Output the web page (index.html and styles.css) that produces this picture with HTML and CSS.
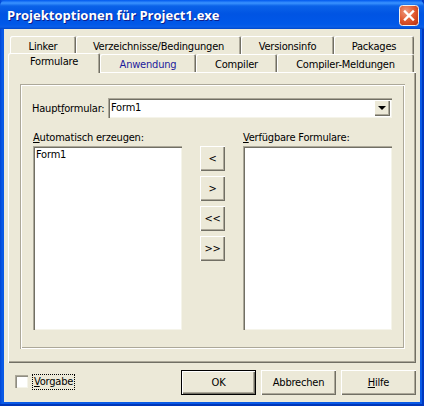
FILE: index.html
```html
<!DOCTYPE html>
<html lang="de">
<head>
	<meta charset="utf-8">
	<title>Projektoptionen</title>
	<link rel="stylesheet" href="styles.css">
</head>
<body>
	<div class="window">
		<div class="titlebar">
			<span class="title-text">Projektoptionen für Project1.exe</span>
			<div class="close-btn">
				<svg width="20" height="21" viewBox="0 0 20 21">
					<defs>
						<radialGradient id="redface" cx="35%" cy="30%" r="85%">
							<stop offset="0" stop-color="#ee9a80"/>
							<stop offset="0.55" stop-color="#e0582f"/>
							<stop offset="1" stop-color="#bd3413"/>
						</radialGradient>
					</defs>
					<rect x="0.5" y="0.5" width="19" height="20" rx="3" fill="url(#redface)" stroke="#f4f1ec"/>
					<path d="M6 6.5 L14 14.5 M14 6.5 L6 14.5" stroke="#fff" stroke-width="2.4" stroke-linecap="square"/>
				</svg>
			</div>
		</div>
		<div class="client">
			<div class="tab-row tab-row-back">
				<div class="tab w-linker">Linker</div>
				<div class="tab w-verz">Verzeichnisse/Bedingungen</div>
				<div class="tab w-vers">Versionsinfo</div>
				<div class="tab w-pack">Packages</div>
			</div>
			<div class="tab-row tab-row-front">
				<div class="tab tab-active w-form">Formulare</div>
				<div class="tab tab-hot w-anw">Anwendung</div>
				<div class="tab w-comp">Compiler</div>
				<div class="tab w-meld">Compiler-Meldungen</div>
			</div>
			<div class="page">
				<div class="group">
					<div class="main-form-row">
						<label class="main-form-label">Haupt<u>f</u>ormular:</label>
						<div class="combo">
							<span class="combo-text">Form1</span>
							<div class="combo-arrow"><span class="arrow-down"></span></div>
						</div>
					</div>
					<div class="lists">
						<div class="list-col">
							<label class="list-label"><u>A</u>utomatisch erzeugen:</label>
							<div class="listbox">Form1</div>
						</div>
						<div class="move-btns">
							<div class="btn move-btn">&lt;</div>
							<div class="btn move-btn">&gt;</div>
							<div class="btn move-btn">&lt;&lt;</div>
							<div class="btn move-btn">&gt;&gt;</div>
						</div>
						<div class="list-col">
							<label class="list-label"><u>V</u>erfügbare Formulare:</label>
							<div class="listbox"></div>
						</div>
					</div>
				</div>
			</div>
			<div class="footer">
				<div class="checkbox"></div>
				<span class="check-label"><u>V</u>orgabe</span>
				<div class="footer-btns">
					<div class="btn footer-btn btn-default">OK</div>
					<div class="btn footer-btn">Abbrechen</div>
					<div class="btn footer-btn"><span><u>H</u>ilfe</span></div>
				</div>
			</div>
		</div>
	</div>
</body>
</html>
```

FILE: styles.css
```css
html, body {
	margin: 0;
	padding: 0;
}

body {
	width: 424px;
	height: 406px;
	overflow: hidden;
	font-family: "DejaVu Sans", "Liberation Sans", sans-serif;
	font-stretch: condensed;
	font-size: 11px;
	letter-spacing: -0.2px;
	color: #000;
}

u {
	text-underline-offset: 1px;
}

.window {
	width: 424px;
	height: 406px;
	box-sizing: border-box;
	padding: 0 4px 4px;
	background: linear-gradient(90deg, #0046d5 0, #0a5ae6 2px, #0a5ae6 4px);
	display: flex;
	flex-direction: column;
	box-shadow: inset -2px 0 0 #0038c0, inset 0 -2px 0 #0036b8;
}

.titlebar {
	height: 29px;
	box-sizing: border-box;
	margin: 0 -4px;
	padding: 1px 5px 0 7px;
	display: flex;
	align-items: center;
	justify-content: space-between;
	background: linear-gradient(180deg, #0058ee 0, #3a93ff 3px, #0a62e8 6px, #0054e3 14px, #0058e8 24px, #0a5ee8 27px, #0046c8 29px);
	border-radius: 6px 6px 0 0;
}

.title-text {
	font-family: "Open Sans", "Noto Sans", sans-serif;
	font-stretch: normal;
	font-size: 13px;
	font-weight: 700;
	letter-spacing: 0;
	color: #fff;
	text-shadow: 1px 1px 0 #0f1f8c;
}

.close-btn {
	width: 20px;
	height: 21px;
}

.client {
	flex: 1;
	background: #ece9d8;
	padding: 7px 4px 0 4px;
	display: flex;
	flex-direction: column;
}

.tab-row {
	display: flex;
	height: 18px;
}

.tab-row-back {
	padding-left: 2px;
}

.tab {
	box-sizing: border-box;
	text-align: center;
	line-height: 22px;
	background: #ece9d8;
	border-radius: 2px 2px 0 0;
	box-shadow: inset 1px 1px 0 #fff, inset -1px 0 0 #716f64, inset -2px 0 0 #aca899;
}

.w-linker { width: 66px; }
.w-verz { width: 165px; }
.w-vers { width: 93px; }
.w-pack { width: 80px; }
.w-form { width: 92px; }
.w-anw { width: 96px; }
.w-comp { width: 81px; }
.w-meld { width: 137px; }

.tab-row-front .tab-active {
	height: 20px;
	margin-top: -1px;
	line-height: 18px;
	position: relative;
	z-index: 1;
}

.tab-hot {
	color: #1c1a9c;
}

.page {
	box-sizing: border-box;
	width: 408px;
	height: 291px;
	padding: 12px 11px 14px 12px;
	background: #ece9d8;
	box-shadow: inset 1px 1px 0 #fff, inset -1px -1px 0 #716f64, inset -2px -2px 0 #aca899;
}

.group {
	box-sizing: border-box;
	height: 265px;
	padding: 14px 13px 0 12px;
	box-shadow: inset 1px 1px 0 #aca899, inset 2px 2px 0 #fff, inset -1px -1px 0 #fff, inset -2px -2px 0 #aca899;
}

.main-form-row {
	display: flex;
	align-items: center;
	height: 20px;
}

.main-form-label {
	width: 76px;
}

.combo {
	flex: 1;
	height: 20px;
	box-sizing: border-box;
	padding: 2px;
	display: flex;
	background: #fff;
	box-shadow: inset 1px 1px 0 #aca899, inset 2px 2px 0 #716f64, inset -1px -1px 0 #f5f4ea;
}

.combo-text {
	flex: 1;
	padding-left: 1px;
	line-height: 16px;
}

.combo-arrow {
	width: 16px;
	height: 16px;
	display: flex;
	align-items: center;
	justify-content: center;
	background: #ece9d8;
	box-shadow: inset 1px 1px 0 #fff, inset -1px -1px 0 #716f64, inset -2px -2px 0 #aca899;
}

.arrow-down {
	width: 0;
	height: 0;
	border-style: solid;
	border-width: 4px 4px 0;
	border-color: #000 transparent transparent;
}

.lists {
	display: grid;
	grid-template-columns: 149px 25px 149px;
	column-gap: 18px;
	margin-left: 1px;
	margin-top: 10px;
}

.list-col {
	display: flex;
	flex-direction: column;
}

.list-label {
	height: 18px;
	line-height: 19px;
}

.listbox {
	box-sizing: border-box;
	height: 184px;
	padding: 2px 3px;
	line-height: 14px;
	background: #fff;
	box-shadow: inset 1px 1px 0 #aca899, inset 2px 2px 0 #716f64, inset -1px -1px 0 #f5f4ea;
}

.move-btns {
	display: flex;
	flex-direction: column;
	gap: 5px;
	padding-top: 18px;
}

.btn {
	box-sizing: border-box;
	display: flex;
	align-items: center;
	justify-content: center;
	background: #ece9d8;
	box-shadow: inset 1px 1px 0 #fff, inset -1px -1px 0 #716f64, inset -2px -2px 0 #aca899;
}

.move-btn {
	height: 25px;
}

.footer {
	display: flex;
	align-items: flex-start;
	height: 39px;
	box-sizing: border-box;
	padding: 7px 0 0 7px;
}

.checkbox {
	box-sizing: border-box;
	width: 13px;
	height: 13px;
	margin-top: 5px;
	background: #fff;
	box-shadow: inset 1px 1px 0 #aca899, inset 2px 2px 0 #8f8d82, inset -1px -1px 0 #f5f4ea;
}

.check-label {
	margin: 4px 0 0 4px;
	padding: 0 1px;
	height: 14px;
	line-height: 14px;
	border: 1px dotted #000;
}

.footer-btns {
	margin-left: auto;
	display: flex;
	gap: 5px;
}

.footer-btn {
	width: 75px;
	height: 25px;
}

.btn-default {
	box-shadow: inset 0 0 0 1px #000, inset 2px 2px 0 #fff, inset -2px -2px 0 #716f64, inset -3px -3px 0 #aca899;
}
```
